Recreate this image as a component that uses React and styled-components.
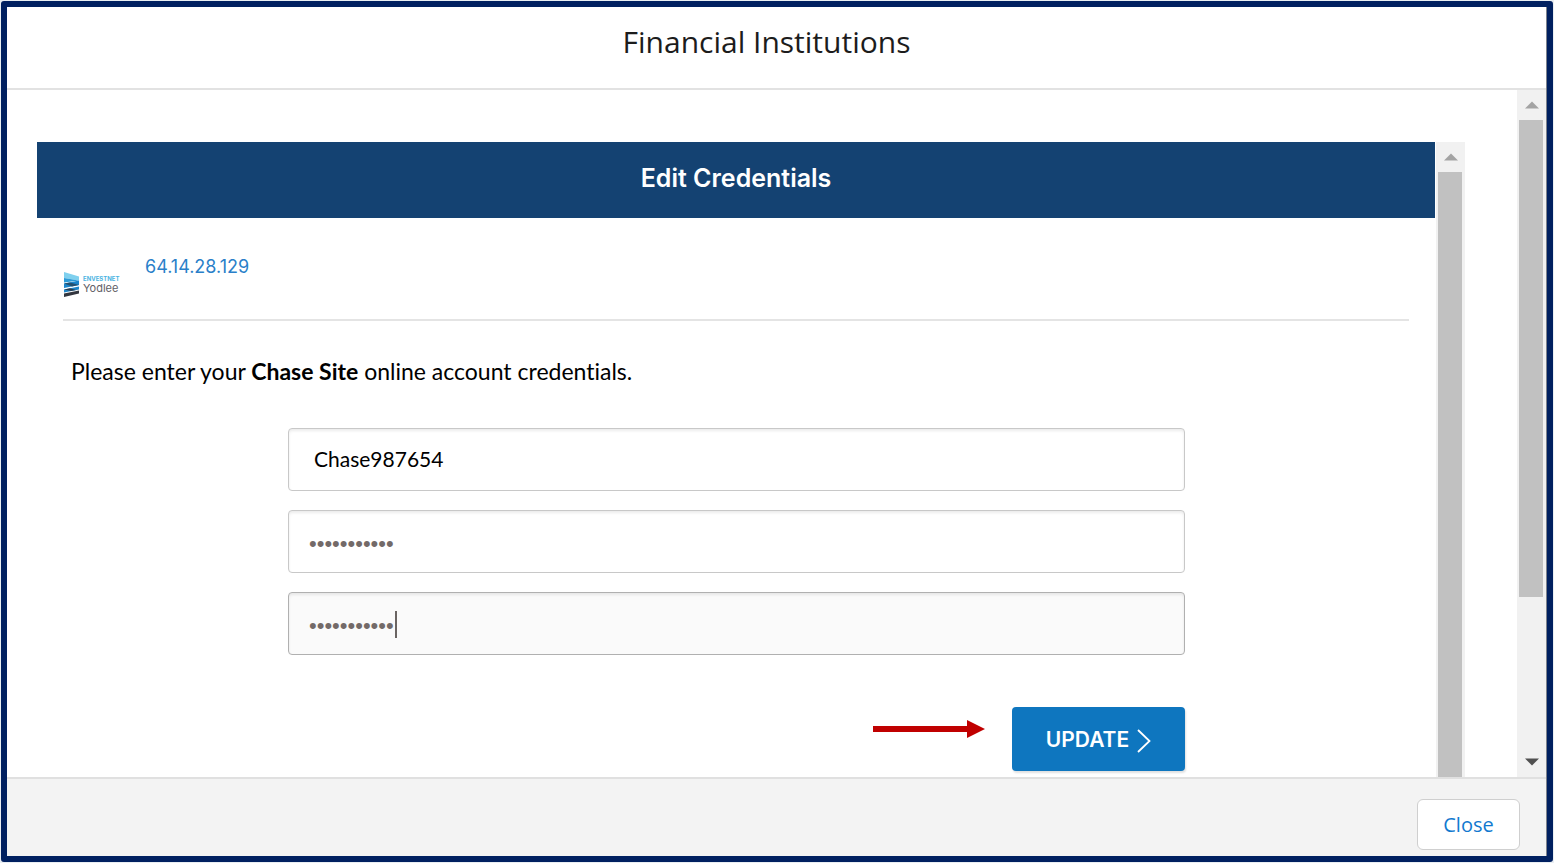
// src/components/EditCredentials.jsx
import { useState } from 'react';
import styled, { createGlobalStyle } from 'styled-components';

const EditCredentials = () => {
  const [username, setUsername] = useState('Chase987654');
  const [password, setPassword] = useState('chasepass12');
  const [confirm, setConfirm] = useState('chasepass12');

  return (
    <Page>
      <GlobalStyle />
      <Modal>
        <ModalHeader>
          <ModalTitle>Financial Institutions</ModalTitle>
        </ModalHeader>

        <ModalBody>
          <BodyContent>
            <Panel>
              <Banner>Edit Credentials</Banner>

              <SiteRow>
                <YodleeLogo />
                <SiteLink href="#site">64.14.28.129</SiteLink>
              </SiteRow>

              <Message>
                Please enter your <strong>Chase Site</strong> online account credentials.
              </Message>

              <Form onSubmit={(e) => e.preventDefault()}>
                <Field
                  type="text"
                  aria-label="Username"
                  value={username}
                  onChange={(e) => setUsername(e.target.value)}
                />
                <Field
                  type="password"
                  aria-label="Password"
                  value={password}
                  onChange={(e) => setPassword(e.target.value)}
                />
                <ActiveField>
                  <Field
                    type="password"
                    aria-label="Confirm password"
                    $active
                    value={confirm}
                    onChange={(e) => setConfirm(e.target.value)}
                  />
                  <Caret />
                </ActiveField>

                <Actions>
                  <Pointer />
                  <UpdateButton type="submit">
                    UPDATE
                    <Chevron />
                  </UpdateButton>
                </Actions>
              </Form>
            </Panel>
            <Scrollbar size="100%" />
          </BodyContent>
          <Scrollbar size="76%" showDown />
        </ModalBody>

        <ModalFooter>
          <CloseButton type="button">Close</CloseButton>
        </ModalFooter>
      </Modal>
    </Page>
  );
};

const Scrollbar = ({ size, showDown }) => (
  <ScrollTrack aria-hidden="true">
    <ScrollArrow>
      <svg width="14" height="8" viewBox="0 0 14 8">
        <path d="M0 7.5L7 0.5L14 7.5Z" fill="#a3a3a3" />
      </svg>
    </ScrollArrow>
    <ScrollRail>
      <ScrollThumb $size={size} />
    </ScrollRail>
    {showDown && (
      <ScrollArrow>
        <svg width="14" height="8" viewBox="0 0 14 8">
          <path d="M0 0.5L7 7.5L14 0.5Z" fill="#505050" />
        </svg>
      </ScrollArrow>
    )}
  </ScrollTrack>
);

const YodleeLogo = () => (
  <LogoSvg width="58" height="26" viewBox="0 0 58 26" role="img" aria-label="Envestnet Yodlee">
    <path d="M1 0L16 4.5V8.5L1 6Z" fill="#7fd0ee" />
    <path d="M1 6L16 8.5L1 10.5Z" fill="#2b9bd8" />
    <path d="M1 11.5L16 8.5V13L1 16Z" fill="#1b85cb" />
    <path d="M1 11.5L7 10.5L16 13L9 14.5Z" fill="#24506f" />
    <path d="M1 17.5L16 14.5V17.5L1 20.5Z" fill="#1f86c9" />
    <path d="M1 17.5L7 16.3L13 18L8 19Z" fill="#2c3e50" />
    <path d="M1 21.5L16 18.5V21.5L1 25Z" fill="#33363f" />
    <text x="20" y="9" fontSize="6" fontWeight="700" fill="#4db4e2">ENVESTNET</text>
    <text x="20" y="20" fontSize="11" fill="#5f6066">Yodlee</text>
  </LogoSvg>
);

const Pointer = () => (
  <PointerSvg width="112" height="18" viewBox="0 0 112 18" aria-hidden="true">
    <path d="M0 6H94V0L112 9L94 18V12H0Z" fill="#c00000" />
  </PointerSvg>
);

const Chevron = () => (
  <ChevronSvg width="14" height="24" viewBox="0 0 14 24" aria-hidden="true">
    <path d="M1 1L12.5 12L1 23" fill="none" stroke="#fff" strokeWidth="1.8" />
  </ChevronSvg>
);

const GlobalStyle = createGlobalStyle`
  * {
    box-sizing: border-box;
  }

  body {
    margin: 0;
    background-color: #fff;
    font-variant-ligatures: none;
  }

  button, input {
    font: inherit;
  }
`;

const Page = styled.div`
  display: flex;
  min-height: 100vh;
  padding: 1px;
  background-color: #e9eef2;
`;

const Modal = styled.div`
  flex: 1;
  display: flex;
  flex-direction: column;
  padding-right: 1px;
  border: 6px solid #002060;
  border-radius: 3px;
  background-color: #7d828c;
`;

const ModalHeader = styled.header`
  display: flex;
  align-items: center;
  justify-content: center;
  height: 83px;
  padding: 0 20px 12px 0;
  border-bottom: 2px solid #e2e2e2;
  background-color: #fff;
`;

const ModalTitle = styled.h1`
  margin: 0;
  font-family: 'Open Sans', 'Segoe UI', sans-serif;
  font-size: 30px;
  font-weight: 400;
  line-height: 40px;
  color: #1c1c1c;
`;

const ModalBody = styled.main`
  flex: 1;
  display: flex;
  background-color: #fff;
`;

const BodyContent = styled.div`
  flex: 1;
  display: flex;
  gap: 1px;
  padding: 52px 52px 0 30px;
`;

const Panel = styled.section`
  flex: 1;
`;

const Banner = styled.h2`
  display: flex;
  align-items: center;
  justify-content: center;
  height: 76px;
  margin: 0;
  padding-bottom: 4px;
  background-color: #144272;
  color: #fff;
  font-family: Inter, sans-serif;
  font-size: 25px;
  font-weight: 600;
`;

const SiteRow = styled.div`
  display: flex;
  align-items: flex-start;
  gap: 24px;
  height: 103px;
  margin: 0 26px;
  padding-top: 36px;
  border-bottom: 2px solid #e4e4e4;
`;

const LogoSvg = styled.svg`
  margin-top: 18px;
  font-family: Inter, sans-serif;
`;

const SiteLink = styled.a`
  font-family: Inter, sans-serif;
  font-size: 18px;
  line-height: 26px;
  color: #2a7fc9;
  text-decoration: none;
`;

const Message = styled.p`
  margin: 34px 34px 41px;
  font-family: Lato, Calibri, sans-serif;
  font-size: 23px;
  line-height: 32px;
  color: #000;
`;

const Form = styled.form`
  display: flex;
  flex-direction: column;
  gap: 19px;
  padding: 0 250px 5px 251px;
`;

const Field = styled.input`
  display: block;
  width: 100%;
  height: 63px;
  padding: ${(props) => (props.type === 'password' ? '5px 20px 0' : '0 25px 2px')};
  border: 1px solid ${(props) => (props.$active ? '#b0b0b0' : '#c8c8c8')};
  border-radius: 4px;
  outline: none;
  background-color: ${(props) => (props.$active ? '#fafafa' : '#fff')};
  box-shadow: inset 0 2px 3px rgba(0, 0, 0, 0.08);
  color: ${(props) => (props.type === 'password' ? '#736a68' : '#000')};
  font-family: ${(props) =>
    props.type === 'password' ? "'Liberation Sans', sans-serif" : 'Lato, Calibri, sans-serif'};
  font-size: ${(props) => (props.type === 'password' ? '22px' : '21px')};
`;

const ActiveField = styled.div`
  position: relative;
`;

const Caret = styled.span`
  position: absolute;
  top: 19px;
  left: 107px;
  width: 2px;
  height: 27px;
  background-color: #6a6462;
`;

const Actions = styled.div`
  display: flex;
  align-items: flex-start;
  justify-content: flex-end;
  gap: 27px;
  padding-top: 33px;
`;

const PointerSvg = styled.svg`
  margin-top: 13px;
`;

const UpdateButton = styled.button`
  display: flex;
  align-items: center;
  justify-content: center;
  gap: 8px;
  width: 173px;
  height: 64px;
  padding: 0;
  border: none;
  border-radius: 4px;
  background-color: #0e76bf;
  box-shadow: 1px 2px 2px rgba(0, 0, 0, 0.12);
  color: #fff;
  font-family: Inter, sans-serif;
  font-size: 21px;
  font-weight: 600;
  cursor: pointer;
`;

const ChevronSvg = styled.svg`
  margin-top: 4px;
`;

const ScrollTrack = styled.div`
  display: flex;
  flex-direction: column;
  width: 29px;
  background-color: #f1f1f1;
`;

const ScrollArrow = styled.div`
  display: flex;
  align-items: center;
  justify-content: center;
  height: 30px;
`;

const ScrollRail = styled.div`
  flex: 1;
  padding: 0 3px 0 2px;
`;

const ScrollThumb = styled.div`
  height: ${(props) => props.$size};
  background-color: #c1c1c1;
`;

const ModalFooter = styled.footer`
  display: flex;
  align-items: center;
  justify-content: flex-end;
  height: 79px;
  padding: 13px 26px 0 0;
  border-top: 2px solid #e0e0e0;
  background-color: #f3f3f3;
`;

const CloseButton = styled.button`
  width: 103px;
  height: 51px;
  padding: 0;
  border: 1px solid #cfcfcf;
  border-radius: 6px;
  background-color: #fff;
  color: #1279cf;
  font-family: 'Open Sans', 'Segoe UI', sans-serif;
  font-size: 20px;
  cursor: pointer;
`;

export default EditCredentials;
